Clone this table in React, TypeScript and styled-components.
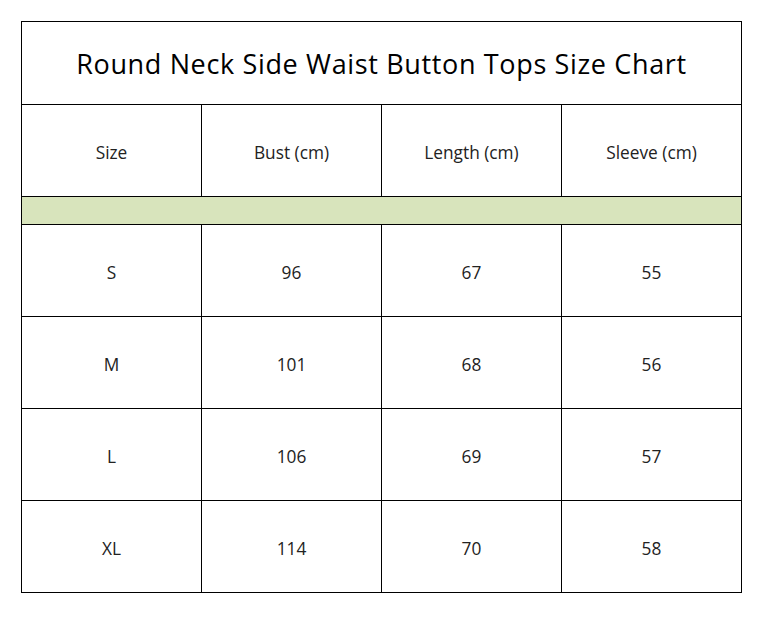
import React from "react";
import styled, { createGlobalStyle } from "styled-components";

const Global = createGlobalStyle`
  html, body { margin: 0; padding: 0; background: #ffffff; }
  body { font-family: "Open Sans", "Noto Sans", sans-serif; color: #111; }
`;

const Page = styled.div`
  padding: 21px 0 0 21px;
`;

const Grid = styled.div`
  display: grid;
  width: 719px;
  grid-template-columns: repeat(4, 179px);
  grid-template-rows: 82px 91px 27px repeat(4, 91px);
  gap: 1px;
  background: #000;
  border: 1px solid #000;
`;

const Title = styled.div`
  grid-column: 1 / -1;
  background: #fff;
  display: flex;
  align-items: center;
  justify-content: center;
  font-size: 27px;
  font-weight: 500;
  letter-spacing: 0.65px;
  color: #000;
`;

const Cell = styled.div`
  background: #fff;
  display: flex;
  align-items: center;
  justify-content: center;
  font-size: 17.3px;
  color: #222;
  padding-top: 3px;
`;

const Band = styled.div`
  grid-column: 1 / -1;
  background: #d8e4bc;
`;

const headers = ["Size", "Bust (cm)", "Length (cm)", "Sleeve (cm)"];
const rows = [
  ["S", "96", "67", "55"],
  ["M", "101", "68", "56"],
  ["L", "106", "69", "57"],
  ["XL", "114", "70", "58"],
];

export default function App() {
  return (
    <>
      <Global />
      <Page>
        <Grid>
          <Title>Round Neck Side Waist Button Tops Size Chart</Title>
          {headers.map((h) => (
            <Cell key={h}>{h}</Cell>
          ))}
          <Band />
          {rows.map((r) =>
            r.map((v, i) => <Cell key={r[0] + i}>{v}</Cell>)
          )}
        </Grid>
      </Page>
    </>
  );
}
